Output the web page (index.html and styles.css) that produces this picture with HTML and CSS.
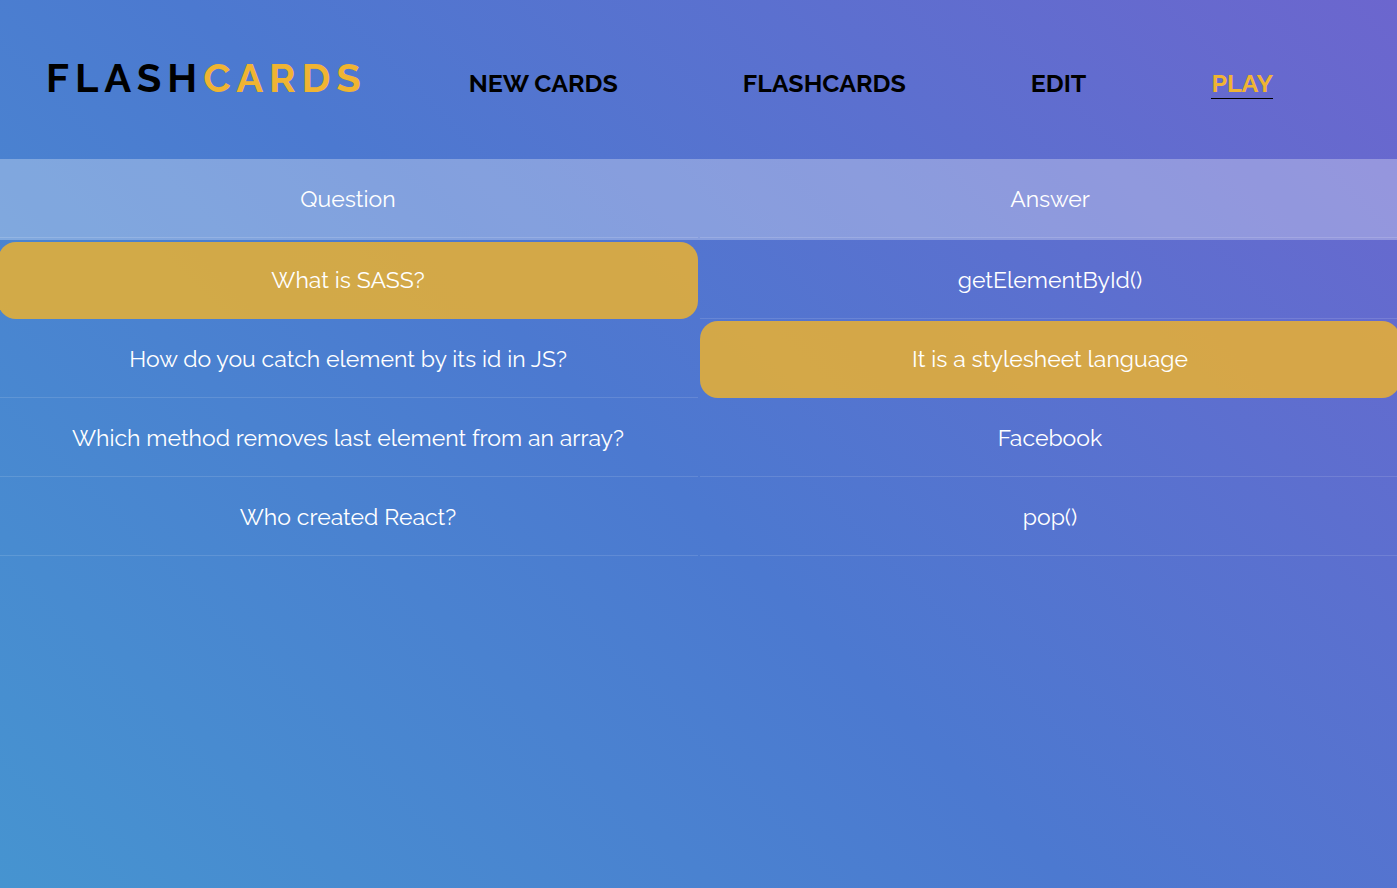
FILE: index.html
```html
<!DOCTYPE html>
<html lang="en">
<head>
<meta charset="utf-8">
<meta name="viewport" content="width=device-width, initial-scale=1">
<title>Flashcards</title>
<link rel="stylesheet" href="styles.css">
</head>
<body>
<header class="header">
  <h1 class="logo">FLASH<span class="logo-accent">CARDS</span></h1>
  <nav class="nav">
    <a class="nav-link" href="#new">NEW CARDS</a>
    <a class="nav-link" href="#flashcards">FLASHCARDS</a>
    <a class="nav-link" href="#edit">EDIT</a>
    <a class="nav-link nav-link-active" href="#play" aria-current="page">PLAY</a>
  </nav>
</header>
<main class="board">
  <table class="cards">
    <thead>
      <tr><th class="cell head-cell" scope="col">Question</th><th class="cell head-cell" scope="col">Answer</th></tr>
    </thead>
    <tbody>
      <tr><td class="cell selected">What is SASS?</td><td class="cell">getElementById()</td></tr>
      <tr><td class="cell">How do you catch element by its id in JS?</td><td class="cell selected">It is a stylesheet language</td></tr>
      <tr><td class="cell">Which method removes last element from an array?</td><td class="cell">Facebook</td></tr>
      <tr><td class="cell">Who created React?</td><td class="cell">pop()</td></tr>
    </tbody>
  </table>
</main>
</body>
</html>
```
FILE: styles.css
```css
* {
  box-sizing: border-box;
}

body {
  margin: 0;
  min-height: 100vh;
  background: linear-gradient(45deg, #4694d0, #4c79d0 47%, #6c66ce);
  color: #fff;
  font-family: Raleway, Lato, sans-serif;
}

.header {
  display: flex;
  align-items: center;
  padding: 48px 124px 51px 46px;
}

.logo {
  margin: 0;
  color: #000;
  font-size: 40px;
  font-weight: 700;
  line-height: 60px;
  letter-spacing: 6px;
}

.logo-accent {
  color: #f0b432;
}

.nav {
  display: flex;
  flex: 1;
  justify-content: space-between;
  padding: 10px 0 0 102px;
}

.nav-link {
  border-bottom: 1px solid transparent;
  color: #000;
  font-size: 25px;
  font-weight: 700;
  line-height: 30px;
  text-decoration: none;
}

.nav-link-active {
  border-color: #000;
  color: #f0b432;
}

.board {
  overflow: hidden;
}

/* The table reaches past both edges so the outer spacing is not seen. */
.cards {
  width: calc(100% + 9px);
  margin: -2px -5px 0 -4px;
  border-spacing: 2px;
  table-layout: fixed;
}

.cell {
  height: 77px;
  padding: 0 16px;
  border-bottom: 1px solid rgba(255, 255, 255, 0.12);
  font-size: 23px;
  font-weight: 400;
  line-height: 28px;
  text-align: center;
}

.head-cell {
  height: 81px;
  border-bottom: 2px solid transparent;
  background:
    linear-gradient(rgba(255, 255, 255, 0.15), rgba(255, 255, 255, 0.15)) 0 78px / 100% 1px no-repeat,
    rgba(255, 255, 255, 0.3);
}

/* Fills the spacing between the two header cells. */
.head-cell:first-child {
  box-shadow: 2px 0 0 rgba(255, 255, 255, 0.3);
}

.selected {
  border-bottom-color: transparent;
  border-radius: 18px;
  background: rgba(238, 178, 45, 0.83);
}
```
